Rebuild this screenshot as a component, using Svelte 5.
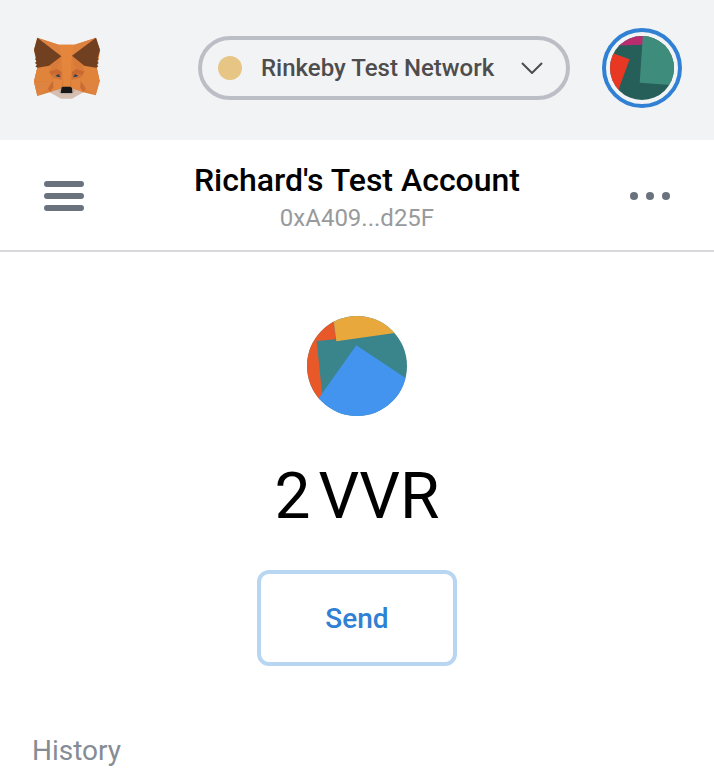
<script>
  const networks = [
    'Main Ethereum Network',
    'Ropsten Test Network',
    'Kovan Test Network',
    'Rinkeby Test Network'
  ];
  let network = $state('Rinkeby Test Network');
  const account = { name: "Richard's Test Account", address: '0xA409...d25F' };
  const token = { amount: 2, symbol: 'VVR' };
</script>

<div class="app">
  <header class="topbar">
    <a class="logo" href="#home" aria-label="Home">
      <svg viewBox="18 27 204 186" width="68" height="62" aria-hidden="true">
        <path fill="#dc7f3b" d="M34 29L98 50H146L210 29L222 69L213 119L221 159L209 202L172 193L139 205H105L71 193L34 204L24 162L34 119L24 65Z" />
        <path fill="#e4863b" d="M98 50H146L137 93L132 176H113L106 88Z" />
        <path fill="#de8240" d="M34 29L98 50L106 85ZM210 29L146 50L138 83Z" />
        <path fill="#d87a39" d="M34 119L106 88L94 123L70 131L82 160H24ZM211 119L138 83L150 123L175 131L163 160H221Z" />
        <path fill="#e0833b" d="M34 119L76 113L70 131L82 160H24ZM211 119L169 113L175 131L163 160H221Z" />
        <path fill="#de8440" d="M24 162L80 160L66 181L34 204ZM221 160L165 160L179 181L209 202Z" />
        <path fill="#ca6b32" d="M80 160L66 181L72 193L83 178ZM165 160L179 181L172 193L162 178Z" />
        <path fill="#e2853f" d="M82 149L110 154L106 179L72 193L83 178ZM163 149L135 154L139 179L172 193L162 178Z" />
        <path fill="#c9692f" d="M70 131L94 123L106 132V144L76 141ZM175 131L150 123L138 132V144L169 141Z" />
        <path fill="#d0763a" d="M76 141L87 137L104 144L108 156L84 151ZM169 141L157 137L140 144L136 156L160 151Z" />
        <path fill="#3c4250" d="M88 143L98 138L104 148L93 146ZM157 143L147 138L141 148L152 146Z" />
        <path fill="#704021" d="M34 29L106 85L69 113L34 119L28 115L33 110L27 105L32 99L27 94L30 90L24 65ZM210 29L138 83L175 113L211 119L217 115L212 110L218 105L213 99L218 94L215 90L222 65Z" />
        <path fill="#d5bfb2" d="M71 193L101 183L107 197H137L143 183L172 193L138 212H105Z" />
        <path fill="#bfaea3" d="M96 188L106 180L104 194H140L138 180L148 188L138 199H105Z" />
        <path fill="#151719" d="M107 178L111 176H133L138 180L139 195H104Z" />
      </svg>
    </a>
    <div class="network">
      <span class="network-dot"></span>
      <select aria-label="Network" bind:value={network}>
        {#each networks as name}
          <option value={name}>{name}</option>
        {/each}
      </select>
      <svg class="chevron" viewBox="0 0 22 12" width="22" height="12" aria-hidden="true">
        <path d="M1 1L11 11L21 1" fill="none" stroke="#4d4d4d" stroke-width="2" />
      </svg>
    </div>
    <button class="avatar" aria-label="My accounts">
      <svg viewBox="48 48 192 192" width="64" height="64" aria-hidden="true">
        <clipPath id="avatar-clip"><circle cx="144" cy="144" r="96" /></clipPath>
        <g clip-path="url(#avatar-clip)">
          <path fill="#265e5a" d="M48 48H240V240H48Z" />
          <path fill="#b92d70" d="M48 40H148V74L48 77Z" />
          <path fill="#3e8c7b" d="M147 40L137 188L240 196V40Z" />
          <path fill="#e83824" d="M40 94L107 118L73 210L40 220Z" />
        </g>
      </svg>
    </button>
  </header>

  <nav class="account-bar">
    <button class="icon-button" aria-label="Menu">
      <svg viewBox="0 0 40 30" width="40" height="30" aria-hidden="true">
        <path d="M3 3H37M3 15H37M3 27H37" stroke="#6a737d" stroke-width="6" stroke-linecap="round" />
      </svg>
    </button>
    <button class="account">
      <span class="account-name">{account.name}</span>
      <span class="account-address">{account.address}</span>
    </button>
    <button class="icon-button" aria-label="Account options">
      <svg viewBox="0 0 40 8" width="40" height="8" fill="#6a737d" aria-hidden="true">
        <circle cx="4" cy="4" r="4" /><circle cx="20" cy="4" r="4" /><circle cx="36" cy="4" r="4" />
      </svg>
    </button>
  </nav>

  <main>
    <section class="overview">
      <svg viewBox="30 30 300 300" width="100" height="100" aria-hidden="true">
        <clipPath id="token-clip"><circle cx="180" cy="180" r="150" /></clipPath>
        <g clip-path="url(#token-clip)">
          <path fill="#3a848c" d="M30 30H330V330H30Z" />
          <path fill="#e95828" d="M20 20H110L115 100L59 105L76 270L60 300L20 290Z" />
          <path fill="#e8a83c" d="M107 20L118 106L330 76V20Z" />
          <path fill="#4294ee" d="M178 118L340 226V340H20Z" />
        </g>
      </svg>
      <h1><span>{token.amount}</span> <span>{token.symbol}</span></h1>
      <button class="send">Send</button>
    </section>
    <section class="history">
      <h2>History</h2>
    </section>
  </main>
</div>

<style>
  :global(body) {
    margin: 0;
    background: #fff;
  }
  .app {
    font-family: Roboto, "Liberation Sans", sans-serif;
    color: #000;
  }
  button {
    font-family: inherit;
    padding: 0;
    border: 0;
    background: none;
    cursor: pointer;
  }
  svg {
    display: block;
  }
  .topbar {
    display: flex;
    align-items: center;
    gap: 32px;
    box-sizing: border-box;
    height: 140px;
    padding: 0 32px 4px;
    background: #f2f3f5;
  }
  .network {
    position: relative;
    margin-left: auto;
  }
  select {
    appearance: none;
    display: block;
    box-sizing: border-box;
    width: 372px;
    height: 64px;
    margin: 0;
    padding: 0 64px 0 59px;
    border: 4px solid #bbbfc5;
    border-radius: 32px;
    background: transparent;
    color: #4d4d4d;
    font: 500 24px/28px Roboto, "Liberation Sans", sans-serif;
  }
  .network-dot {
    position: absolute;
    left: 20px;
    top: 20px;
    width: 24px;
    height: 24px;
    border-radius: 50%;
    background: #e7c584;
    pointer-events: none;
  }
  .chevron {
    position: absolute;
    right: 27px;
    top: 26px;
    pointer-events: none;
  }
  .avatar {
    padding: 4px;
    border: 4px solid #3080d4;
    border-radius: 50%;
  }
  .account-bar {
    display: flex;
    align-items: center;
    justify-content: space-between;
    box-sizing: border-box;
    height: 112px;
    padding: 2px 44px 0;
    border-bottom: 2px solid #d8d9dd;
  }
  .account {
    display: flex;
    flex-direction: column;
    align-items: center;
    gap: 6px;
    padding-top: 2px;
  }
  .account-name {
    font-size: 32px;
    line-height: 36px;
    font-weight: 500;
    color: #000;
  }
  .account-address {
    font-size: 24px;
    line-height: 28px;
    color: #989a9b;
  }
  .overview {
    display: flex;
    flex-direction: column;
    align-items: center;
    padding-top: 64px;
  }
  h1 {
    display: flex;
    gap: 8px;
    margin: 36px 0 28px;
    font-size: 64px;
    line-height: 90px;
    font-weight: 400;
  }
  .send {
    width: 200px;
    height: 96px;
    border: 4px solid #b8d6f1;
    border-radius: 12px;
    color: #3080d4;
    font-size: 28px;
    font-weight: 500;
  }
  .history {
    padding: 64px 32px 0;
  }
  h2 {
    margin: 0;
    font-size: 28px;
    line-height: 42px;
    font-weight: 400;
    color: #848c96;
  }
</style>
